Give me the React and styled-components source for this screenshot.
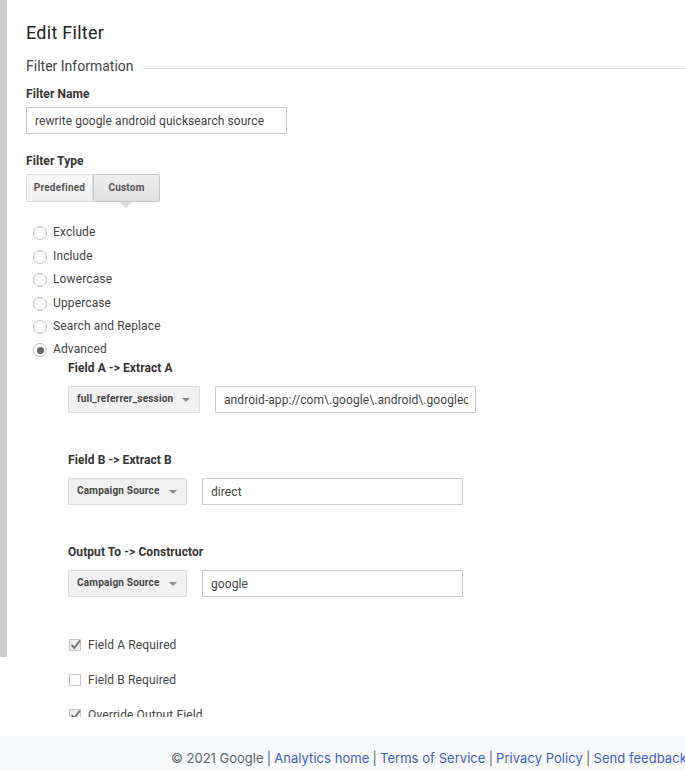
import React from 'react';
import styled, { createGlobalStyle } from 'styled-components';

const Global = createGlobalStyle`
  html, body { margin: 0; padding: 0; background: #fff; }
  body { font-family: Roboto, "Liberation Sans", sans-serif; color: #333; overflow: hidden; }
  * { box-sizing: border-box; }
`;
const Page = styled.div`
  width: 685px; height: 772px; overflow: hidden; display: flex; flex-direction: column;
`;
const Main = styled.div`
  display: flex; height: 716px; align-items: flex-start; flex: none;
`;
const Rail = styled.div`
  width: 7px; height: 657px; background: #ccc; flex: none;
`;
const Content = styled.div`
  flex: 1; height: 717px; overflow: hidden; padding: 22px 0 0 19px; min-width: 0;
`;
const Title = styled.h1`
  margin: 0; font-size: 18px; line-height: 21px; font-weight: 400; letter-spacing: .27px; color: #222;
`;
const SectionHead = styled.div`
  display: flex; align-items: center; gap: 9px; margin-top: 13px; height: 20px;
  font-size: 14px; color: #444;
  &::after { content: ""; flex: 1; height: 1px; background: #e0e0e0; margin-top: 4px; }
`;
const Label = styled.div`
  font-size: 12px; line-height: 14px; font-weight: 700; letter-spacing: .08px; color: #333;
  margin-top: ${p => p.$top}px;
`;
const TextBox = styled.input`
  display: block; width: 261px; height: 27px; border: 1px solid #ccc; background: #fff; border-radius: 0;
  padding: 1px 7px 0 8px; margin: ${p => p.$top || 0}px 0 0; outline: none;
  font-family: Roboto, "Liberation Sans", sans-serif; font-size: 12px; letter-spacing: .07px; color: #444;
`;
const Tabs = styled.div`
  display: flex; margin-top: 6px; width: 134px; height: 28px;
`;
const Tab = styled.div`
  position: relative; height: 28px; width: ${p => p.$w}px; text-align: center;
  font-size: 10px; font-weight: 700; line-height: 26px; letter-spacing: .2px; color: #555;
  border: 1px solid ${p => p.$active ? '#c6c6c6' : '#ddd'};
  border-radius: ${p => p.$active ? '0 2px 2px 0' : '2px 0 0 2px'};
  background: ${p => p.$active ? 'linear-gradient(#eee,#e0e0e0)' : 'linear-gradient(#f8f8f8,#f1f1f1)'};
  ${p => p.$active && `
    &::after {
      content: ""; position: absolute; left: 26px; top: 27px; border: 6px solid transparent;
      border-top-color: #dcdcdc; border-bottom: 0;
    }`}
`;
const Radios = styled.div`
  margin-top: 18.7px; margin-bottom: -.3px; padding-left: 7px; display: flex; flex-direction: column;
`;
const RadioRow = styled.div`
  display: flex; align-items: center; gap: 6px; height: 23.4px; font-size: 12px; letter-spacing: .13px; color: #444;
`;
const RadioDot = styled.span`
  width: 14px; height: 14px; border-radius: 50%; border: 1px solid #bbb; background: #fff;
  display: flex; align-items: center; justify-content: center; margin-top: 2px; flex: none;
  ${p => p.$on && `&::after { content: ""; width: 7px; height: 7px; border-radius: 50%; background: #666; }`}
`;
const Block = styled.div`
  padding-left: 42px;
`;
const FieldRow = styled.div`
  display: flex; margin-top: 11px; gap: 15px; align-items: flex-start;
`;
const Select = styled.div`
  width: ${p => p.$w}px; height: 27px; display: flex; align-items: center; justify-content: space-between;
  padding: 0 9px ${p => p.$low ? 1 : 2}px 8px; background: #f1f1f1; border: 1px solid #ddd; border-radius: 1px;
  font-size: 10px; font-weight: 700; letter-spacing: .2px; color: #444; flex: none;
  &::after { content: ""; border: 4px solid transparent; border-top-color: #888; border-bottom: 0; margin-top: 3px; }
`;
const Checks = styled.div`
  margin-top: 41px; padding-left: 1px; display: flex; flex-direction: column; gap: 20px;
`;
const CheckRow = styled.div`
  display: flex; align-items: center; gap: 7px; height: 15px; font-size: 12px; letter-spacing: .12px; color: #444;
`;
const Box = styled.span`
  position: relative; width: 12px; height: 12px; border: 1px solid #c4c4c4; background: ${p => p.$on ? '#eee' : '#fff'}; flex: none;
  & svg { position: absolute; left: -1px; top: -2px; }
`;
const Footer = styled.footer`
  flex: none; margin-top: 20px; height: 35px; background: #f8f9fa; white-space: nowrap; overflow: hidden;
  padding: 14px 0 0 171px; font-family: Inter, sans-serif; font-size: 13px; line-height: 16px; color: #5f6368;
`;
const FootLink = styled.a`
  color: #3c5fc8; text-decoration: none; letter-spacing: .05px;
`;
const Sep = styled.span`
  margin: 0 -.5px;
`;

const radios = ['Exclude', 'Include', 'Lowercase', 'Uppercase', 'Search and Replace', 'Advanced'];
const Tick = () => (
  <svg width="13" height="13" viewBox="0 0 13 13" fill="none">
    <path d="M2.5 7l2.8 3L11 2.5" stroke="#777" strokeWidth="2" />
  </svg>
);
const Check = ({ on, children }) => (
  <CheckRow><Box $on={on}>{on && <Tick />}</Box>{children}</CheckRow>
);
const links = ['Analytics home', 'Terms of Service', 'Privacy Policy', 'Send feedback'];

export default function App() {
  return (
    <Page>
      <Global />
      <Main>
        <Rail />
        <Content>
          <Title>Edit Filter</Title>
          <SectionHead>Filter Information</SectionHead>
          <Label $top={11}>Filter Name</Label>
          <TextBox $top={6} readOnly value="rewrite google android quicksearch source" />
          <Label $top={20}>Filter Type</Label>
          <Tabs>
            <Tab $w={67}>Predefined</Tab>
            <Tab $w={67} $active>Custom</Tab>
          </Tabs>
          <Radios>
            {radios.map(r => (
              <RadioRow key={r}><RadioDot $on={r === 'Advanced'} />{r}</RadioRow>
            ))}
          </Radios>
          <Block>
            <Label $top={0}>Field A -&gt; Extract A</Label>
            <FieldRow>
              <Select $w={132}>full_referrer_session</Select>
              <TextBox readOnly value="android-app://com\.google\.android\.googlequicksearchbox" />
            </FieldRow>
            <Label $top={40}>Field B -&gt; Extract B</Label>
            <FieldRow>
              <Select $w={119} $low>Campaign Source</Select>
              <TextBox readOnly value="direct" />
            </FieldRow>
            <Label $top={40}>Output To -&gt; Constructor</Label>
            <FieldRow>
              <Select $w={119} $low>Campaign Source</Select>
              <TextBox readOnly value="google" />
            </FieldRow>
            <Checks>
              <Check on>Field A Required</Check>
              <Check>Field B Required</Check>
              <Check on>Override Output Field</Check>
            </Checks>
          </Block>
        </Content>
      </Main>
      <Footer>
        © 2021 Google
        {links.map(l => (
          <React.Fragment key={l}> <Sep>|</Sep> <FootLink>{l}</FootLink></React.Fragment>
        ))}
      </Footer>
    </Page>
  );
}
